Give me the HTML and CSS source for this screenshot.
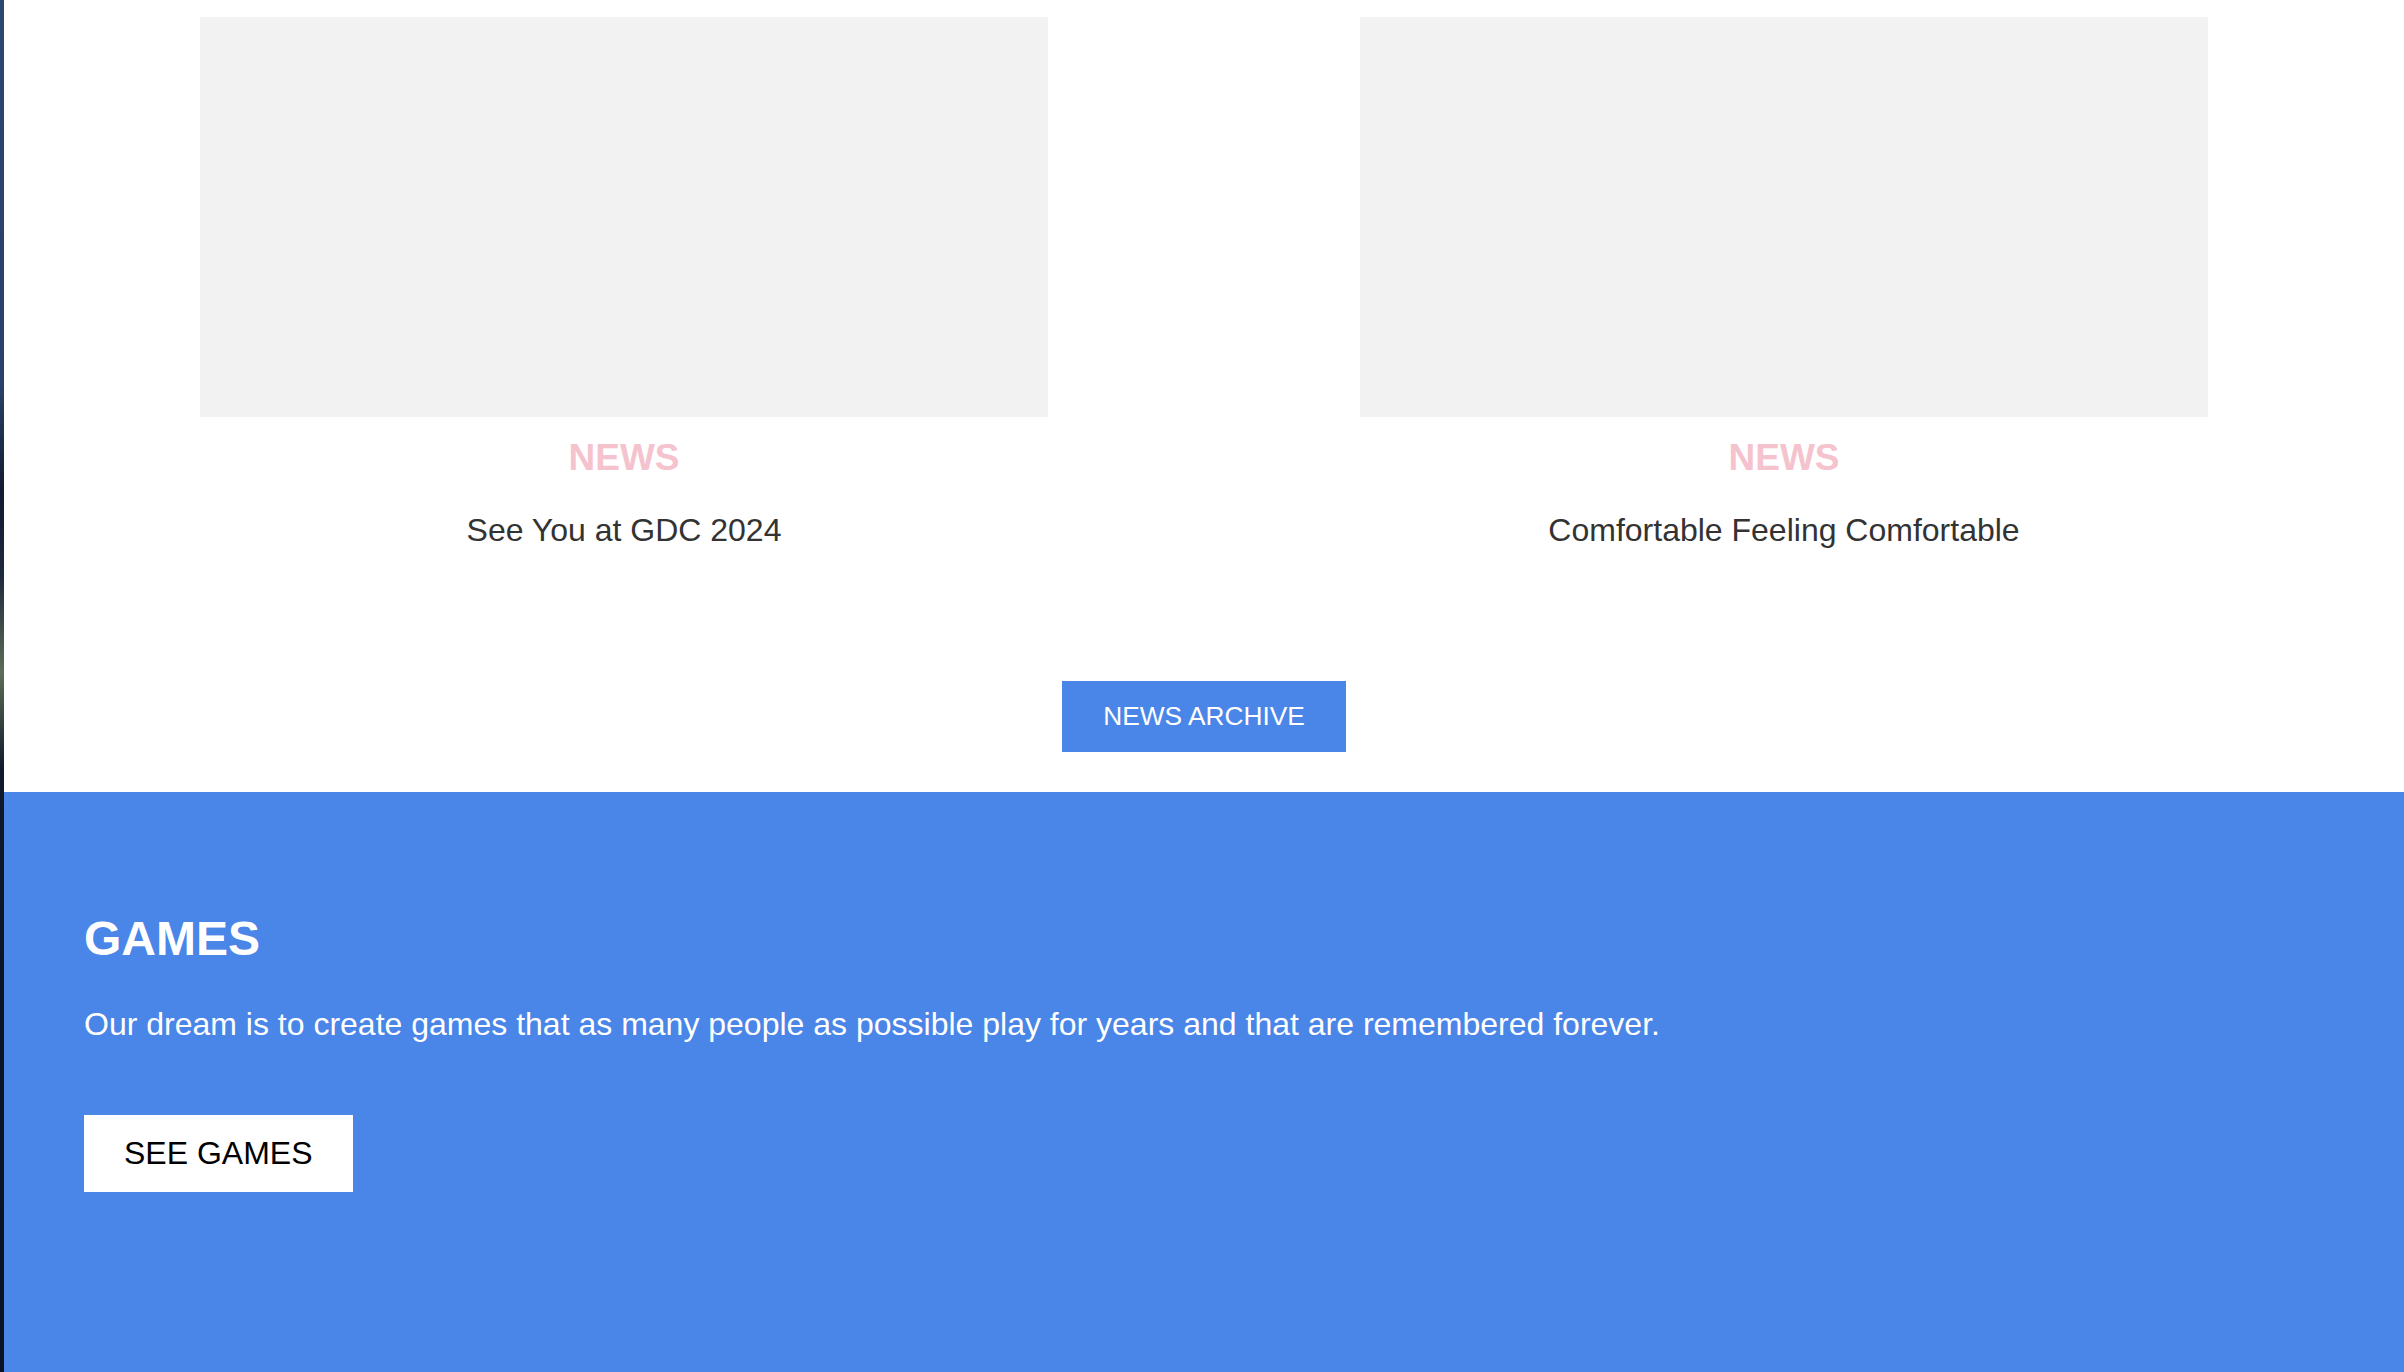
FILE: index.html
```html
<!DOCTYPE html>
<html lang="en">
<head>
<meta charset="utf-8">
<title>News and Games</title>
<link rel="stylesheet" href="styles.css">
</head>
<body>
<div class="edge"></div>
<div class="page">
  <section class="news">
    <div class="news-grid">
      <article class="card">
        <div class="thumb"></div>
        <div class="tag">NEWS</div>
        <h3 class="title">See You at GDC 2024</h3>
      </article>
      <article class="card">
        <div class="thumb"></div>
        <div class="tag">NEWS</div>
        <h3 class="title">Comfortable Feeling Comfortable</h3>
      </article>
    </div>
    <div class="archive-row">
      <a class="btn-archive" href="#">NEWS ARCHIVE</a>
    </div>
  </section>
  <section class="games">
    <h2 class="games-title">GAMES</h2>
    <p class="games-text">Our dream is to create games that as many people as possible play for years and that are remembered forever.</p>
    <a class="btn-games" href="#">SEE GAMES</a>
  </section>
</div>
</body>
</html>
```
FILE: styles.css
```css
html, body {
  margin: 0;
  padding: 0;
  height: 100%;
  overflow: hidden;
}
body {
  display: flex;
  background: #ffffff;
  font-family: "Liberation Sans", Arial, Helvetica, sans-serif;
}
.edge {
  width: 4px;
  flex: 0 0 4px;
  background: linear-gradient(to bottom, #2c4672 0%, #2a4168 28%, #101a30 36%, #1c2a3e 42%, #5b6e55 49%, #111a2c 56%, #0c1428 70%, #0a1226 100%);
}
.page {
  flex: 1;
  display: flex;
  flex-direction: column;
}
.news {
  padding-top: 17px;
  padding-bottom: 40px;
}
.news-grid {
  display: grid;
  grid-template-columns: 848px 848px;
  column-gap: 312px;
  padding: 0 196px;
}
.card {
  display: flex;
  flex-direction: column;
  align-items: center;
}
.thumb {
  width: 848px;
  height: 400px;
  background: #f2f2f2;
}
.tag {
  margin-top: 19px;
  font-size: 37px;
  line-height: 1.2;
  font-weight: bold;
  color: #f5c3cd;
}
.title {
  margin: 31px 0 0;
  font-size: 32px;
  line-height: 1.2;
  font-weight: normal;
  color: #333333;
}
.archive-row {
  display: flex;
  justify-content: center;
  margin-top: 131px;
}
.btn-archive {
  display: block;
  padding: 20px 41px;
  font-size: 26.3px;
  line-height: 1.2;
  color: #ffffff;
  background: #4a85e8;
  text-decoration: none;
}
.games {
  box-sizing: border-box;
  background: #4a85e8;
  padding: 118px 80px 0;
  min-height: 580px;
}
.games-title {
  margin: 0;
  font-size: 48px;
  line-height: 1.2;
  font-weight: bold;
  color: #ffffff;
}
.games-text {
  margin: 37px 0 0;
  font-size: 32px;
  line-height: 1.2;
  color: #ffffff;
}
.btn-games {
  display: inline-block;
  margin-top: 72px;
  padding: 19px 40px;
  font-size: 32px;
  line-height: 1.2;
  color: #000000;
  background: #ffffff;
  text-decoration: none;
}
```
